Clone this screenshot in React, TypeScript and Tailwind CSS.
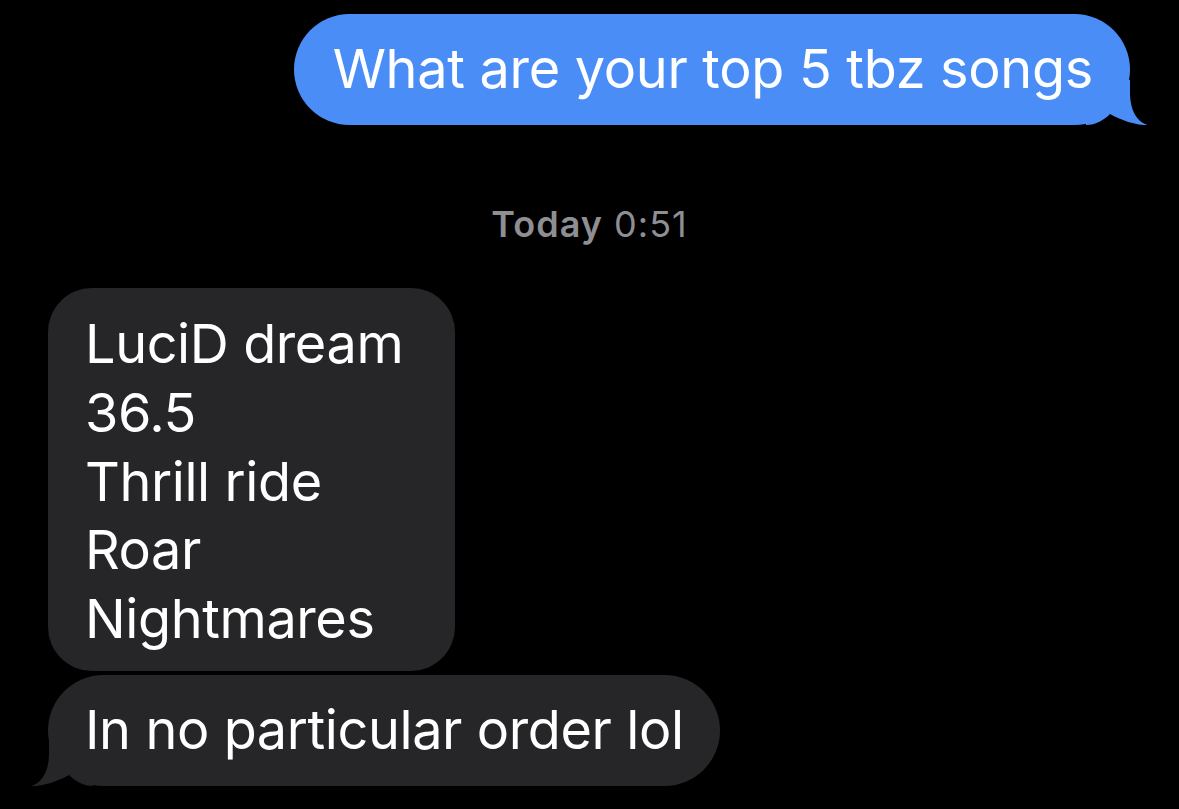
import React from "react";

const FONT = { fontFamily: "Inter, 'Noto Sans', sans-serif" };

function RightTail({ color }: { color: string }) {
  return (
    <svg
      className="absolute right-[-18px] bottom-0"
      width="62"
      height="45"
      viewBox="0 0 62 45"
    >
      <path
        d="M0 0 H44 V12 C44 32 52 42 61.5 45 C54 45.6 38 42 24 34 C18 40 10 45 0 45 Z"
        fill={color}
      />
    </svg>
  );
}

function LeftTail({ color }: { color: string }) {
  return (
    <svg
      className="absolute left-[-17px] bottom-0"
      width="62"
      height="45"
      viewBox="0 0 62 45"
    >
      <path
        d="M62 0 H18 V12 C18 32 10 42 0.5 45 C8 45.6 24 42 38 34 C44 40 52 45 62 45 Z"
        fill={color}
      />
    </svg>
  );
}

export default function App() {
  return (
    <div
      className="w-[1179px] h-[809px] bg-black text-white overflow-hidden flex flex-col"
      style={FONT}
    >
      <div className="flex justify-end pr-[49px] pt-[14px]">
        <div className="relative bg-[#4a8df6] rounded-[56px] h-[111px] pl-[39px] pr-[37px] flex items-center">
          <RightTail color="#4a8df6" />
          <span className="relative z-10 text-[54px] leading-none tracking-[-0.3px] whitespace-nowrap pb-[2px]">
            What are your top 5 tbz songs
          </span>
        </div>
      </div>

      <div className="mt-[81px] text-center text-[#8e8e93] text-[36px] leading-none tracking-[1px]">
        <span className="font-semibold">Today</span> 0:51
      </div>

      <div className="mt-[46px] pl-[48px] flex flex-col items-start gap-[4px]">
        <div className="bg-[#262628] rounded-[44px] w-[407px] h-[383px] pl-[37px] pt-[22px] text-[54px] leading-[68.75px] tracking-[-0.4px]">
          <div>LuciD dream</div>
          <div>36.5</div>
          <div>Thrill ride</div>
          <div>Roar</div>
          <div>Nightmares</div>
        </div>
        <div className="relative bg-[#262628] rounded-[56px] w-[672px] h-[111px] pl-[37px] flex items-center">
          <LeftTail color="#262628" />
          <span className="relative z-10 text-[54px] leading-none tracking-[-0.4px] whitespace-nowrap pb-[2px]">
            In no particular order lol
          </span>
        </div>
      </div>
    </div>
  );
}
